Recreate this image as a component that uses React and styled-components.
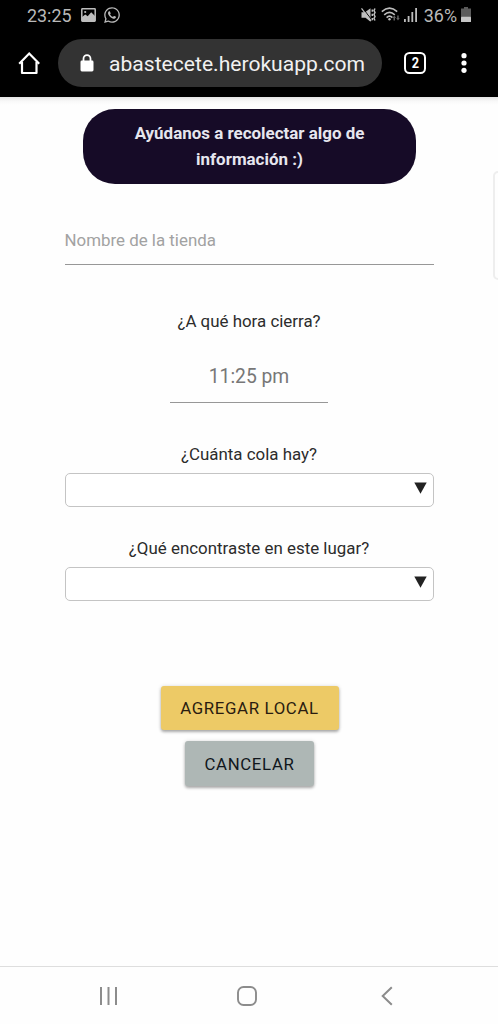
import React from 'react';
import styled, { createGlobalStyle } from 'styled-components';
import { FaWhatsapp } from 'react-icons/fa';

const GlobalStyle = createGlobalStyle`
  * { box-sizing: border-box; }
  body {
    margin: 0;
    background: #fefefe;
    font-family: Roboto, 'Liberation Sans', sans-serif;
  }
  svg { display: block; flex: none; }
`;

const Screen = styled.div`
  display: flex;
  flex-direction: column;
  width: 498px;
  height: 1024px;
  overflow: hidden;
  background: #fefefe;
`;

const StatusBar = styled.header`
  display: flex;
  align-items: flex-start;
  height: 31px;
  padding: 0 27px 0 27px;
  background: #000;
  color: #b9b9b9;
`;

const StatusText = styled.span`
  font-size: 17.9px;
  line-height: 31px;
  height: 31px;
`;

const StatusIcons = styled.div`
  display: flex;
  align-items: center;
  height: 29px;
  gap: ${(p) => p.$gap || '0'};
  margin-left: ${(p) => p.$left || '0'};
  margin-right: ${(p) => p.$right || '0'};
`;

const BrowserBar = styled.div`
  display: flex;
  align-items: center;
  height: 66px;
  padding: 0 28px 2px 17px;
  background: #000;
`;

const AddressPill = styled.div`
  display: flex;
  align-items: center;
  width: 324px;
  height: 48px;
  margin: 0 22px 0 17px;
  padding-left: 22px;
  border-radius: 24px;
  background: #333;
  color: #f1f1f1;
`;

const Url = styled.span`
  margin-left: 15px;
  padding-top: 1px;
  font-size: 21.1px;
  line-height: 48px;
  white-space: nowrap;
`;

const TabCount = styled.div`
  display: flex;
  align-items: center;
  justify-content: center;
  width: 22px;
  height: 22px;
  margin-right: 35px;
  border: 2px solid #fff;
  border-radius: 5.5px;
  color: #fff;
  font-size: 15px;
  font-weight: 700;
  line-height: 18px;
`;

const TabDigit = styled.span`
  transform: scaleX(0.85);
`;

const Page = styled.main`
  position: relative;
  display: flex;
  flex-direction: column;
  align-items: center;
  height: 869px;
  padding-top: 12px;
  background: linear-gradient(#e4e4e4, #f8f8f8 4px, #fefefe 8px);
`;

const Banner = styled.h1`
  width: 333px;
  height: 75px;
  margin: 0;
  padding: 12px 39px 12px 40px;
  border-radius: 32px;
  background: #160b27;
  color: #e6e6ee;
  font-size: 16.95px;
  font-weight: 700;
  line-height: 25.5px;
  text-align: center;
`;

const Field = styled.div`
  width: ${(p) => p.$width};
  height: ${(p) => p.$height};
  margin-top: ${(p) => p.$top};
  border-bottom: 1px solid #979797;
  color: ${(p) => p.$color};
  font-size: ${(p) => p.$size};
  line-height: ${(p) => p.$line};
  text-align: ${(p) => p.$align || 'left'};
`;

const Label = styled.label`
  height: 24px;
  margin-top: ${(p) => p.$top};
  color: #2c2c2c;
  font-size: 16.9px;
  line-height: 24px;
  white-space: nowrap;
`;

const Select = styled.div`
  display: flex;
  justify-content: flex-end;
  width: 369px;
  height: 34px;
  margin-top: 7px;
  padding: 8px 6px 0 0;
  border: 1.5px solid #c4c4c4;
  border-radius: 5px;
  background: #fff;
`;

const Button = styled.button`
  width: ${(p) => p.$width};
  height: ${(p) => p.$height};
  margin-top: ${(p) => p.$top};
  margin-left: 1px;
  padding: 0;
  border: 0;
  border-radius: 3px;
  background: ${(p) => p.$bg};
  color: ${(p) => p.$color};
  box-shadow: 0 2px 3px rgba(0, 0, 0, 0.3), 0 0 4px rgba(0, 0, 0, 0.12);
  font-family: inherit;
  font-size: 16.8px;
  font-weight: 400;
  letter-spacing: 0.65px;
  line-height: 44px;
`;

const EdgeHandle = styled.div`
  position: absolute;
  top: 74px;
  right: -8px;
  width: 13px;
  height: 109px;
  border: 2px solid #eee;
  border-radius: 5px;
`;

const SystemNav = styled.nav`
  display: flex;
  align-items: center;
  gap: 119px;
  height: 58px;
  padding: 1px 0 0 99px;
  border-top: 1px solid #dedede;
  background: #fefefe;
`;

const NavItem = styled.span`
  display: flex;
  margin-left: ${(p) => p.$left || '0'};
`;

const PictureIcon = () => (
  <svg width="15" height="14" viewBox="0 0 15 14">
    <rect x="0.8" y="0.8" width="13.4" height="12.4" rx="0.6" fill="none" stroke="#bdbdbd" strokeWidth="1.5" />
    <path d="M1 12V9l3.3-2.4 2.4 1.7 3.5-4L14 8v5H1z" fill="#bdbdbd" />
    <circle cx="4.2" cy="4" r="1.1" fill="#bdbdbd" />
  </svg>
);

const MuteIcon = () => (
  <svg width="16" height="16" viewBox="0 0 16 16">
    <path d="M0.500 5.300h3.500L9.500 1.300v13.400L4.500 10.700h-4z" fill="#c0c0c0" />
    <path d="M1.300 .5l9.500 12.500" stroke="#000" strokeWidth="1" />
    <path d="M0.500 1.300l9.500 12.500" stroke="#c0c0c0" strokeWidth="1.200" />
    <path d="M11.300 2.500v2.200M11.300 6.700v2.200M11.300 11v2.200M14 1.500l-1 2 1 2-1 2 1 2-1 2 1 2" fill="none" stroke="#c0c0c0" strokeWidth="1.500" />
  </svg>
);

const WifiIcon = () => (
  <svg width="19" height="15" viewBox="0 0 19 15">
    <g fill="none" stroke="#bdbdbd" strokeWidth="1.6">
      <path d="M0.8 4.6Q8.5-2.2 16.2 4.6" />
      <path d="M3.2 7.8Q8.5 2.9 13.8 7.8" />
      <path d="M5.6 10.600Q8.5 7.800 11.4 10.600" />
    </g>
    <circle cx="8.500" cy="12.300" r="1.200" fill="#bdbdbd" />
    <path d="M11.500 11l1.800-2.500L15 11h-1v2.500h-1.500V11zM15.200 11h1V8.500h1.500V11h1L17 13.500z" fill="#626262" />
  </svg>
);

const SignalIcon = () => (
  <svg width="14" height="14" viewBox="0 0 14 14" fill="#bdbdbd">
    <rect x="0" y="11" width="1.8" height="3" />
    <rect x="3.7" y="8" width="1.8" height="6" />
    <rect x="7.4" y="4" width="1.8" height="10" />
    <rect x="11.200" y="0" width="1.800" height="14" />
  </svg>
);

const BatteryIcon = () => (
  <svg width="10" height="15" viewBox="0 0 10 15">
    <path d="M3 0h4v1.500h3V10H0V1.500h3z" fill="#5b5b5b" />
    <rect y="9.700" width="10" height="5.300" rx="0.500" fill="#c6c6c6" />
  </svg>
);

const HomeIcon = () => (
  <svg width="24" height="24" viewBox="0 0 24 24" fill="none" stroke="#fff" strokeWidth="2.200" strokeLinejoin="round">
    <path d="M5 11v11h14.500V11" />
    <path d="M2.200 12.800L12.200 2.600l10 10.200" strokeLinejoin="miter" />
  </svg>
);

const LockIcon = () => (
  <svg width="14" height="18" viewBox="0 0 14 18">
    <path d="M3.500 8V4.700a3.500 3.500 0 017 0V8" fill="none" stroke="#fff" strokeWidth="1.800" />
    <rect x="0.500" y="6.500" width="13" height="11" rx="1.400" fill="#fff" />
  </svg>
);

const MoreIcon = () => (
  <svg width="6" height="20" viewBox="0 0 6 20" fill="#fff">
    <circle cx="3" cy="2.700" r="2.600" />
    <circle cx="3" cy="10" r="2.600" />
    <circle cx="3" cy="17.300" r="2.600" />
  </svg>
);

const CaretIcon = () => (
  <svg width="13" height="12" viewBox="0 0 13 12">
    <path d="M0.300 0.500h12.400L6.500 11.700z" fill="#222" />
  </svg>
);

const RecentsIcon = () => (
  <svg width="19" height="20" viewBox="0 0 19 20" stroke="#8c8c8c" strokeWidth="2">
    <path d="M2 1v18M9.500 1v18M17 1v18" />
  </svg>
);

const NavHomeIcon = () => (
  <svg width="20" height="20" viewBox="0 0 20 20">
    <rect x="1" y="1" width="18" height="18" rx="5.500" fill="none" stroke="#8c8c8c" strokeWidth="1.900" />
  </svg>
);

const BackIcon = () => (
  <svg width="12" height="20" viewBox="0 0 12 20">
    <path d="M10.800 1.300L1.700 10l9.100 8.700" fill="none" stroke="#8c8c8c" strokeWidth="2" />
  </svg>
);

export default function App() {
  return (
    <>
      <GlobalStyle />
      <Screen>
        <StatusBar>
          <StatusText>23:25</StatusText>
          <StatusIcons $gap="7px" $left="9px" $right="auto">
            <PictureIcon />
            <FaWhatsapp size={18} />
          </StatusIcons>
          <StatusIcons $gap="4px" $right="6px">
            <MuteIcon />
            <WifiIcon />
            <SignalIcon />
          </StatusIcons>
          <StatusText>36%</StatusText>
          <StatusIcons $left="4px">
            <BatteryIcon />
          </StatusIcons>
        </StatusBar>
        <BrowserBar>
          <HomeIcon />
          <AddressPill>
            <LockIcon />
            <Url>abastecete.herokuapp.com</Url>
          </AddressPill>
          <TabCount>
            <TabDigit>2</TabDigit>
          </TabCount>
          <MoreIcon />
        </BrowserBar>
        <Page>
          <Banner>Ayúdanos a recolectar algo de información :)</Banner>
          <Field $width="369px" $height="37px" $top="44px" $color="#a2a2a2" $size="16.9px" $line="25px">
            Nombre de la tienda
          </Field>
          <Label $top="44px">¿A qué hora cierra?</Label>
          <Field $width="158px" $height="41px" $top="29px" $color="#777" $size="19.3px" $line="29px" $align="center">
            11:25 pm
          </Field>
          <Label $top="39px">¿Cuánta cola hay?</Label>
          <Select>
            <CaretIcon />
          </Select>
          <Label $top="29px">¿Qué encontraste en este lugar?</Label>
          <Select>
            <CaretIcon />
          </Select>
          <Button $width="178px" $height="44px" $top="85px" $bg="#edca66" $color="#2a1c10">
            AGREGAR LOCAL
          </Button>
          <Button $width="129px" $height="45px" $top="11px" $bg="#aeb7b5" $color="#10161c">
            CANCELAR
          </Button>
          <EdgeHandle />
        </Page>
        <SystemNav>
          <RecentsIcon />
          <NavHomeIcon />
          <NavItem $left="5px">
            <BackIcon />
          </NavItem>
        </SystemNav>
      </Screen>
    </>
  );
}
